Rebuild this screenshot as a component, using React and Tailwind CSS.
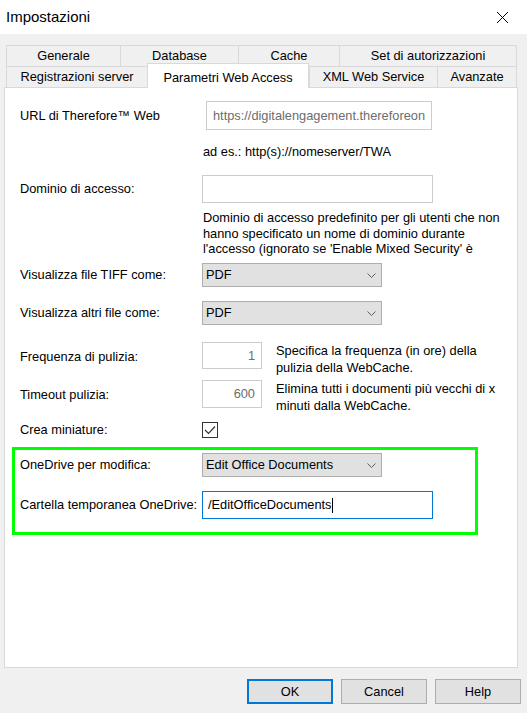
import { Fragment } from 'react'

const Chevron = () => (
  <svg width="9" height="5" viewBox="0 0 9 5" className="shrink-0">
    <path d="M0.5 0.5 L4.5 4.5 L8.5 0.5" fill="none" stroke="#606060" strokeWidth="1" />
  </svg>
)

function Combo({ value }) {
  return (
    <div className="w-[180px] h-[24px] bg-[#e1e1e1] border border-[#adadad] flex items-center justify-between pl-[3px] pr-[5px]">
      <span>{value}</span>
      <Chevron />
    </div>
  )
}

function Row({ label, className = '', children }) {
  return (
    <div className={'flex items-center ' + className}>
      <div className="w-[182px] shrink-0 whitespace-nowrap">{label}</div>
      {children}
    </div>
  )
}

const row1 = [
  ['Generale', 'w-[114px]'],
  ['Database', 'w-[118px]'],
  ['Cache', 'w-[101px]'],
  ['Set di autorizzazioni', 'w-[178px] border-r'],
]

const row2 = [
  ['Registrazioni server', 'w-[141px]'],
  ['Parametri Web Access', 'w-[162px]', true],
  ['XML Web Service', 'w-[128px]'],
  ['Avanzate', 'w-[80px] border-r'],
]

export default function App() {
  return (
    <div className="w-[527px] h-[713px] bg-[#f0f0f0] text-[12.8px] text-black font-['Liberation_Sans',Arial,sans-serif] flex flex-col overflow-hidden">
      {/* title bar */}
      <div className="h-[34px] bg-white flex items-center justify-between pl-[6px] pr-[19px] shrink-0">
        <span className="text-[15px]">Impostazioni</span>
        <svg width="11" height="11" viewBox="0 0 11 11">
          <path d="M0 0 L11 11 M11 0 L0 11" stroke="#000" strokeWidth="1" />
        </svg>
      </div>

      {/* tabs */}
      <div className="mt-[11px] ml-[6px] w-[511px] shrink-0">
        <div className="flex h-[21px]">
          {row1.map(([t, w]) => (
            <div key={t} className={'h-full flex items-center justify-center border-t border-l border-[#d9d9d9] ' + w}>
              {t}
            </div>
          ))}
        </div>
        <div className="flex h-[21px] items-end">
          {row2.map(([t, w, sel]) => (
            <Fragment key={t}>
              {sel ? (
                <div className={'relative z-10 h-[25px] -mb-px bg-white flex items-start justify-center pt-[4px] border-t border-l border-r border-[#d9d9d9] ' + w}>
                  {t}
                </div>
              ) : (
                <div className={'h-full flex items-center justify-center border-t border-l border-[#d9d9d9] ' + w}>
                  {t}
                </div>
              )}
            </Fragment>
          ))}
        </div>
      </div>

      {/* panel */}
      <div className="ml-[4px] w-[514px] h-[581px] shrink-0 border border-[#d9d9d9] bg-white flex flex-col">
        <Row label="URL di Therefore™ Web" className="mt-[13px] pl-[15px] h-[29px]">
          <div className="ml-[4px] w-[226px] h-[29px] border border-[#cccccc] flex items-center pl-[6px] text-[#6d6d6d] overflow-hidden whitespace-nowrap">
            https://digitalengagement.thereforeon
          </div>
        </Row>

        <div className="mt-[14px] ml-[198px] h-[16px] leading-[16px] whitespace-nowrap">ad es.: http(s)://nomeserver/TWA</div>

        <Row label="Dominio di accesso:" className="mt-[15px] pl-[15px] h-[28px]">
          <div className="w-[231px] h-[28px] border border-[#cccccc]" />
        </Row>

        <div className="mt-[7px] ml-[198px] h-[46px] leading-[15.5px] overflow-hidden whitespace-nowrap">
          Dominio di accesso predefinito per gli utenti che non
          <br />
          hanno specificato un nome di dominio durante
          <br />
          l'accesso (ignorato se 'Enable Mixed Security' è
        </div>

        <Row label="Visualizza file TIFF come:" className="mt-[7px] pl-[15px] h-[24px]">
          <Combo value="PDF" />
        </Row>

        <Row label="Visualizza altri file come:" className="mt-[14px] pl-[15px] h-[24px]">
          <Combo value="PDF" />
        </Row>

        <Row label="Frequenza di pulizia:" className="mt-[17px] pl-[15px] h-[30px]">
          <div className="w-[60px] h-[27px] self-start border border-[#cccccc] flex items-center justify-end pr-[6px] text-[#6d6d6d]">1</div>
          <div className="ml-[14px] self-start leading-[17px] whitespace-nowrap">
            Specifica la frequenza (in ore) della
            <br />
            pulizia della WebCache.
          </div>
        </Row>

        <Row label="Timeout pulizia:" className="mt-[8px] pl-[15px] h-[30px]">
          <div className="w-[60px] h-[28px] self-start border border-[#cccccc] flex items-center justify-end pr-[6px] text-[#6d6d6d]">600</div>
          <div className="ml-[14px] self-start leading-[17px] whitespace-nowrap">
            Elimina tutti i documenti più vecchi di x
            <br />
            minuti dalla WebCache.
          </div>
        </Row>

        <Row label="Crea miniature:" className="mt-[12px] pl-[15px] h-[16px]">
          <div className="w-[16px] h-[16px] border border-[#333333] bg-white flex items-center justify-center">
            <svg width="12" height="10" viewBox="0 0 12 10">
              <path d="M1 5 L4.5 8.5 L11 1.5" fill="none" stroke="#333" strokeWidth="1.2" />
            </svg>
          </div>
        </Row>

        <div className="mt-[9px] ml-[7px] w-[466px] border-[3px] border-[#00ff00] pl-[5px] pt-[3px] pb-[13px] flex flex-col">
          <Row label="OneDrive per modifica:" className="h-[24px]">
            <Combo value="Edit Office Documents" />
          </Row>
          <Row label="Cartella temporanea OneDrive:" className="mt-[14px] h-[28px]">
            <div className="w-[231px] h-[28px] border border-[#0078d7] flex items-center pl-[5px] whitespace-nowrap">
              /EditOfficeDocuments
              <span className="w-px h-[15px] bg-black" />
            </div>
          </Row>
        </div>
      </div>

      {/* buttons */}
      <div className="mt-[11px] flex justify-end gap-2 pr-[6px]">
        <button className="w-[86px] h-[25px] bg-[#e1e1e1] border-2 border-[#0078d7] flex items-center justify-center">OK</button>
        <button className="w-[86px] h-[25px] bg-[#e1e1e1] border border-[#adadad] flex items-center justify-center">Cancel</button>
        <button className="w-[86px] h-[25px] bg-[#e1e1e1] border border-[#adadad] flex items-center justify-center">Help</button>
      </div>
    </div>
  )
}
